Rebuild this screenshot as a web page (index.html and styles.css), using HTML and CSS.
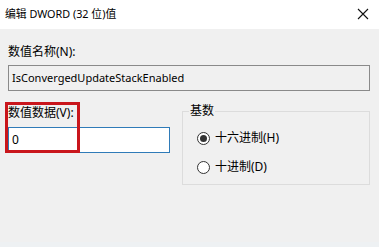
FILE: index.html
```html
<!DOCTYPE html>
<html lang="zh-CN">
<head>
<meta charset="utf-8">
<title>编辑 DWORD (32 位)值</title>
<link rel="stylesheet" href="styles.css">
</head>
<body>
<div class="dialog">
  <div class="titlebar">
    <span class="title">编辑 DWORD (32 位)值</span>
    <svg class="close" width="12" height="12" viewBox="0 0 12 12"><path d="M1 1L11 11M11 1L1 11" stroke="#111" stroke-width="1.1" fill="none"/></svg>
  </div>
  <div class="content">
    <div class="label">数值名称(N):</div>
    <div class="textbox readonly">IsConvergedUpdateStackEnabled</div>
    <div class="row">
      <div class="left">
        <div class="label">数值数据(V):</div>
        <div class="textbox focused">0</div>
        <div class="highlight"></div>
      </div>
      <fieldset class="group">
        <legend>基数</legend>
        <div class="radio-row"><span class="radio checked"></span><span>十六进制(H)</span></div>
        <div class="radio-row"><span class="radio"></span><span>十进制(D)</span></div>
      </fieldset>
    </div>
  </div>
  <div class="footer"></div>
</div>
</body>
</html>
```
FILE: styles.css
```css
html, body {
  margin: 0;
  padding: 0;
}
body {
  width: 379px;
  height: 247px;
  overflow: hidden;
  background: #f0f0f0;
  font-family: "Noto Sans", "Noto Sans CJK SC", sans-serif;
  font-size: 12px;
  color: #000;
}
.dialog {
  display: flex;
  flex-direction: column;
  height: 247px;
}
.titlebar {
  height: 29px;
  background: #fff;
  display: flex;
  align-items: center;
  justify-content: space-between;
  padding: 0 10px 0 5px;
  box-sizing: border-box;
  flex: none;
}
.title {
  font-size: 10.8px;
  line-height: 16px;
  margin-top: -1px;
}
.close {
  margin-top: -2px;
}
.content {
  flex: 1;
  padding: 15px 9px 0 8px;
}
.label {
  line-height: 16px;
  height: 16px;
  white-space: nowrap;
}
.textbox {
  box-sizing: border-box;
  height: 26px;
  line-height: 23px;
  padding: 0 3px;
  font-size: 11px;
  white-space: nowrap;
  overflow: hidden;
}
.readonly {
  margin-top: 5px;
  border: 1px solid #8a8a8a;
  background: #f0f0f0;
}
.row {
  display: flex;
  align-items: flex-start;
  gap: 12px;
}
.left {
  position: relative;
  width: 162px;
  flex: none;
  padding-top: 14px;
}
.focused {
  margin-top: 6px;
  border: 1px solid #2f7bb8;
  background: #fff;
  font-size: 12px;
}
.highlight {
  position: absolute;
  left: -3px;
  top: 11px;
  width: 75px;
  height: 51px;
  box-sizing: border-box;
  border: 3px solid #c9161c;
}
.group {
  margin: 12px 0 0 0;
  width: 188px;
  height: 82px;
  box-sizing: border-box;
  border: 1px solid #dcdcdc;
  padding: 11px 0 0 0;
}
.group legend {
  padding: 0 1px;
  margin-left: 6px;
  line-height: 16px;
}
.radio-row {
  display: flex;
  align-items: center;
  gap: 5px;
  height: 16px;
  line-height: 16px;
  margin-bottom: 13px;
  padding-left: 14px;
}
.radio {
  width: 13px;
  height: 13px;
  box-sizing: border-box;
  border: 1px solid #333;
  border-radius: 50%;
  background: #fff;
  display: flex;
  align-items: center;
  justify-content: center;
  flex: none;
}
.radio.checked::after {
  content: "";
  width: 7px;
  height: 7px;
  border-radius: 50%;
  background: #333;
}
.footer {
  height: 5px;
  background: #eef1f3;
  flex: none;
}
```
